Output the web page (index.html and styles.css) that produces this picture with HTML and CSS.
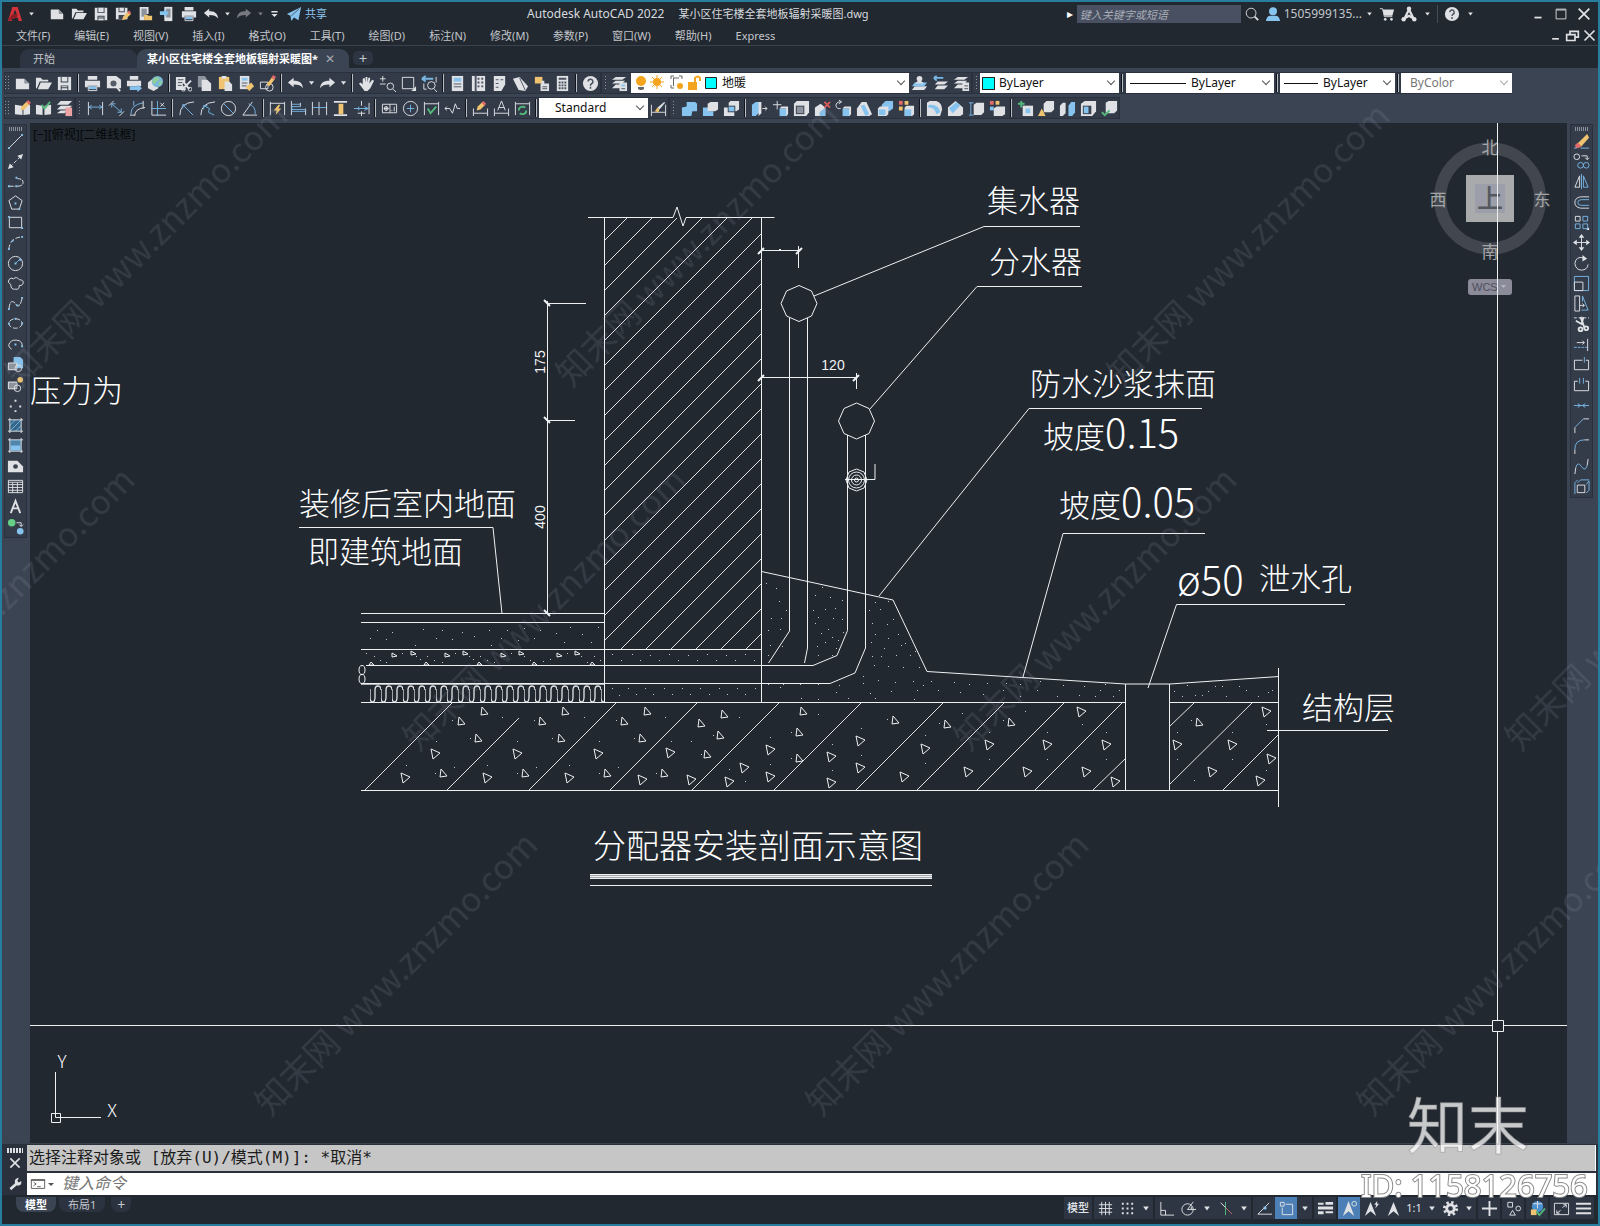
FILE: index.html
```
<!DOCTYPE html>
<html lang="zh-CN">
<head>
<meta charset="utf-8">
<meta name="viewport" content="width=device-width, initial-scale=1">
<title>Autodesk AutoCAD 2022</title>
<link rel="stylesheet" href="styles.css">
</head>
<body>
<svg class="sprite" aria-hidden="true">
  <!-- file and clipboard -->
  <symbol id="new" viewBox="0 0 18 18"><path class="w" d="M2 4h9l5 5v6H2z"/><path class="g" d="M11 4v5h5z"/></symbol>
  <symbol id="open" viewBox="0 0 18 18"><path class="w" d="M1 3h5l2 2h6v2H5l-3 7H1zM6 8h12l-4 7H3z"/></symbol>
  <symbol id="save" viewBox="0 0 18 18"><path class="w" d="M2 2h14v14H2z"/><path class="d" d="M5 2h8v6H5zM5 11h8v5H5z"/><path class="w" d="M6 2h6v5H6zM6 12h6v1H6zM6 14h6v2H6z"/></symbol>
  <symbol id="saveas" viewBox="0 0 18 18"><path class="w" d="M1 2h13v13H1z"/><path class="d" d="M4 2h7v5H4zM4 10h8v5H4z"/><path class="w" d="M5 2h5v4H5z"/><path class="y" d="M8 16l1-4 6-6 3 3-6 6z"/><path class="r" d="M14 7l2-2 2 2-2 2z"/></symbol>
  <symbol id="mopen" viewBox="0 0 18 18"><path class="w" d="M3 1h10v8H8v7H3z"/><path class="g" d="M5 3h6v9H5z"/><path class="y" d="M8 10h4l1 1h4v5H8z"/></symbol>
  <symbol id="msave" viewBox="0 0 18 18"><path class="w" d="M6 1h9v16H6z"/><path class="g" d="M8 3h5v10H8z"/><path class="b" d="M1 6h5V3l5 5-5 5v-3H1z"/></symbol>
  <symbol id="print" viewBox="0 0 18 18"><path class="w" d="M4 1h10v4H4zM1 6h16v7h-3v-2H4v2H1z"/><path class="b" d="M5 12h8v3H5z"/><path class="lw" d="M4.500 11.500h9v5h-9z"/></symbol>
  <symbol id="preview" viewBox="0 0 18 18"><path class="w" d="M2 1h10l5 4v9H2z"/><circle cx="9" cy="9" r="4" fill="#555d69" stroke="#e4e6e8" stroke-width="1.500"/><path class="lw2" d="M12 12l4 5"/></symbol>
  <symbol id="publish" viewBox="0 0 18 18"><path class="w" d="M4 1h9v4H4zM1 6h15v6H1z"/><path class="b" d="M4 12h8v-2l5 4-5 4v-2H4z"/></symbol>
  <symbol id="globe" viewBox="0 0 18 18"><path class="w" d="M1 8l5-4 6 2v8l-5 3-6-3z"/><circle cx="11" cy="7" r="6" fill="#79b8d8"/><path d="M8 3l4-1 1 3-3 2-2 3-3-3zM13 7l3-1-1 4-3 2z" fill="#8fcf9a"/></symbol>
  <symbol id="cut" viewBox="0 0 18 18"><path class="w" d="M1 2h10v5L8 10l3 6H1z"/><path class="dl" d="M3 5h6M3 8h5M3 11h4"/><path class="lw2" d="M8 6l7 9M17 6l-8 8"/><circle class="lw" cx="9" cy="15" r="2"/><circle class="lw" cx="16" cy="15" r="2"/></symbol>
  <symbol id="copy" viewBox="0 0 18 18"><path class="g" d="M2 1h7l2 2v10H2z"/><path class="w" d="M6 5h6l4 4v8H6z"/></symbol>
  <symbol id="paste" viewBox="0 0 18 18"><path class="y" d="M2 2h11v13H2z"/><path class="w" d="M5 1h5v3H5zM8 7h5l3 3v7H8z"/></symbol>
  <symbol id="match" viewBox="0 0 18 18"><path class="w" d="M2 1h10v14H2z"/><path class="b" d="M4 3h6v3H4z"/><path class="dl" d="M4 8.500h6M4 11.500h5"/><path class="y" d="M8 13l6-5 3 4-5 5z"/></symbol>
  <symbol id="bedit" viewBox="0 0 18 18"><path class="lw" d="M1.500 7.500h8v7h-8z"/><circle class="lw" cx="11" cy="13" r="4"/><path class="y" d="M8 10l6-8 3 2-6 8z"/><path class="r" d="M13 3l2-3 3 2-2 3z"/></symbol>
  <symbol id="undo" viewBox="0 0 18 18"><path class="w" d="M1 8l6-5v3c5 0 9 1 10 8-2-3-5-4-10-4v3z"/></symbol>
  <symbol id="redo" viewBox="0 0 18 18"><path class="w" d="M17 8l-6-5v3C6 6 2 7 1 14c2-3 5-4 10-4v3z"/></symbol>
  <symbol id="caret" viewBox="0 0 8 18"><path class="w" d="M1 7h6l-3 4z"/></symbol>
  <symbol id="pan" viewBox="0 0 18 18"><path class="w" d="M5 10V4l2-1 1 5V2h2v6l1-5h2l-1 6 3-4 2 1-4 8-3 3H7L1 9l2-1z"/></symbol>
  <symbol id="zoomrt" viewBox="0 0 18 18"><path class="lw" d="M1 4h6M4 1v6M1 9.500h6M15 15l3 3"/><circle class="lw" cx="12" cy="12" r="3.500"/></symbol>
  <symbol id="zoomwin" viewBox="0 0 18 18"><path class="lw" d="M2.500 2.500h12v12h-12z"/><path class="w" d="M12 17l5-5v5z"/></symbol>
  <symbol id="zoomprev" viewBox="0 0 18 18"><path class="lb" d="M1 4h12M1 4l4-3M1 4l4 3" stroke-width="2"/><path class="lw" d="M3 9v6h3M16 2v6M14 15l3 3"/><circle class="lw" cx="11" cy="11" r="4"/></symbol>
  <symbol id="props" viewBox="0 0 18 18"><path class="w" d="M3 1h12v16H3z"/><path class="b" d="M5 3h8v4H5z"/><path class="dl" d="M5 9.500h8M5 12.500h8"/></symbol>
  <symbol id="dcenter" viewBox="0 0 18 18"><path class="w" d="M2 1h14v16H2z"/><path class="dl" d="M6 1v16M8 4h2M12 4h2M8 8h2M12 8h2M8 12h2M12 12h2" stroke-width="2"/></symbol>
  <symbol id="palette" viewBox="0 0 18 18"><path class="w" d="M3 1h12v9l-4 7H3z"/><path class="dl" d="M5 5h3M5 9h3M5 13h3M10 5h3"/></symbol>
  <symbol id="sheet" viewBox="0 0 18 18"><path class="w" d="M1 4l7-2 9 10-3 5-7-1z"/><path class="dl" d="M8 3l6 13"/></symbol>
  <symbol id="markup" viewBox="0 0 18 18"><path class="y" d="M2 2h8v7H2z"/><path class="w" d="M9 6h3v3H9zM8 9h9v8H8z"/><path class="dl" d="M10 12.500h5M10 14.500h5"/></symbol>
  <symbol id="calc" viewBox="0 0 18 18"><path class="w" d="M3 1h12v16H3z"/><path class="dl" d="M5 4h8M5 8h2M8 8h2M11 8h2M5 11h2M8 11h2M11 11h2M5 14h2M8 14h2M11 14h2" stroke-width="2"/></symbol>
  <symbol id="help" viewBox="0 0 18 18"><circle class="w" cx="9" cy="9" r="8"/><path class="dl" d="M6.500 7a2.500 2.500 0 1 1 3.500 2.300q-1 .5-1 2M9 12.500v2" stroke-width="1.600"/></symbol>
  <symbol id="layers" viewBox="0 0 18 18"><path class="w" d="M5 2h11l-4 3H1zM5 6h10l-3 3H1zM5 10h6v4H1z"/><path class="w" d="M9 8h8v9H9z"/><path class="b" d="M11 10h4v2h-4z"/><path class="dl" d="M11 14.500h4"/></symbol>
  <symbol id="lay1" viewBox="0 0 18 18"><path class="w" d="M4 12h13l-3 4H1z"/><path class="b" d="M4 8h13l-3 4H1z"/><circle class="w" cx="9" cy="4" r="3"/><path class="w" d="M4 9l5-4 5 4z"/></symbol>
  <symbol id="lay2" viewBox="0 0 18 18"><path class="w" d="M6 7h11l-4 3H3zM6 11h11l-4 4H3z"/><path class="lb" d="M2 3h10M2 3l3-2M2 3l3 3" stroke-width="2"/></symbol>
  <symbol id="lay3" viewBox="0 0 18 18"><path class="w" d="M5 2h11l-4 3H1zM5 6h10l-3 3H1zM5 10h5v4H1zM10 8h7v9h-7z"/><path class="dl" d="M12 11.500h4M12 14.500h4"/></symbol>
  <!-- dimension tools -->
  <symbol id="ann1" viewBox="0 0 18 18"><path class="w" d="M1 5l7 1 1 1v9l-8-1zM17 5l-7 1v10l7-1z"/><path class="y" d="M7 11l1-4 6-6 3 3-6 6z"/><path class="r" d="M13 2l2-2 3 3-2 2z"/></symbol>
  <symbol id="ann2" viewBox="0 0 18 18"><path class="w" d="M1 5l7 1v10l-7-1zM17 5l-7 1v10l7-1z"/><path class="lg" d="M7 5l3 4 6-7"/></symbol>
  <symbol id="ann3" viewBox="0 0 18 18"><path class="w" d="M5 1h12l-4 4H1zM5 6h12l-4 4H1zM5 11h7l-3 3H1z"/><path d="M10 8h7v9h-7z" fill="#eda3a3"/></symbol>
  <symbol id="dlin" viewBox="0 0 18 18"><path class="lw" d="M1.500 2v14M16.500 2v14"/><path class="lb" d="M2 7.500h14M5 5.500L2 7.500l3 2M13 5.500l3 2-3 2"/></symbol>
  <symbol id="dali" viewBox="0 0 18 18"><path class="lw" d="M1 6l5-5M12 17l5-5"/><path class="lb" d="M4 4l10 9M4 8V4h4M10 13h4V9"/></symbol>
  <symbol id="darc" viewBox="0 0 18 18"><path class="lb" d="M2 15Q2 5 15 3M5 1v5"/><path class="lw" d="M6 17q0-8 11-9M1 16h5M15 1v8"/></symbol>
  <symbol id="dord" viewBox="0 0 18 18"><path class="lw" d="M2 1v15h15"/><path class="lb" d="M1 9h16M8 1v16"/><path class="lw" d="M11 3l4 4M15 3l-4 4"/></symbol>
  <symbol id="drad" viewBox="0 0 18 18"><path class="lw" d="M17 2Q2 3 2 16"/><path class="lb" d="M5 5l11 11M5 9V5h4"/></symbol>
  <symbol id="djog" viewBox="0 0 18 18"><path class="lw" d="M17 2Q2 3 2 16"/><path class="lb" d="M5 6l6 3-1 4 6 3M5 10V6h4"/></symbol>
  <symbol id="ddia" viewBox="0 0 18 18"><circle class="lw" cx="9" cy="9" r="7.500"/><path class="lb" d="M4 4l10 10"/></symbol>
  <symbol id="dang" viewBox="0 0 18 18"><path class="lw" d="M12 2L2 16h15"/><path class="lb" d="M8 4q8 3 7 11"/></symbol>
  <symbol id="dquick" viewBox="0 0 18 18"><path class="lw" d="M1.500 2v14M16.500 2v14M2 3.500h14"/><path class="y" d="M10 5l-5 6h3l-1 5 6-7h-3l2-4z"/></symbol>
  <symbol id="dbase" viewBox="0 0 18 18"><path class="lw" d="M1.500 1v15M11 3v4M16.500 9v7"/><path class="lb" d="M2 4.500h9M2 12h14M11 7H2v3h15"/></symbol>
  <symbol id="dcont" viewBox="0 0 18 18"><path class="lw" d="M1.500 2v14M8.500 2v14M16.500 2v14"/><path class="lb" d="M2 8h14"/></symbol>
  <symbol id="dspace" viewBox="0 0 18 18"><path class="lw2" d="M2 2h14M2 16h14"/><path class="y" d="M7 4h5v11H7z"/></symbol>
  <symbol id="dbreak" viewBox="0 0 18 18"><path class="lw" d="M9 1v5M9 12v5M17 3v12"/><path class="lb" d="M1 9h16M12 7l4 2-4 2M6 7v4"/><path class="lw" d="M5 14h8"/></symbol>
  <symbol id="tol" viewBox="0 0 18 18"><path class="lw" d="M1.500 4.500h15v9h-15zM9.500 4.500v9M3 9h5M5.500 6.500v5M11 11h1M14 7v5"/><circle class="lw" cx="5.500" cy="9" r="2"/></symbol>
  <symbol id="cmark" viewBox="0 0 18 18"><circle class="lw" cx="9" cy="9" r="7.500"/><path class="lb" d="M9 5v8M5 9h8"/></symbol>
  <symbol id="insp" viewBox="0 0 18 18"><path class="lw" d="M1.500 2v14M16.500 2v14M2 4h14"/><path class="lg" d="M5 9l3 5 6-7"/></symbol>
  <symbol id="jogl" viewBox="0 0 18 18"><path class="lw" d="M1 9h5l3 5 3-10 2 5h3M3 7L1 9l2 2"/></symbol>
  <symbol id="dedit" viewBox="0 0 18 18"><path class="lw" d="M1.500 9v8M16.500 9v8M2 14h14"/><path class="y" d="M5 11l1-4 5-5 3 3-5 5z"/><path class="r" d="M10 3l2-2 3 3-2 2z"/></symbol>
  <symbol id="dtedit" viewBox="0 0 18 18"><path class="lw" d="M1.500 9v8M16.500 9v8M2 14h14M5 11l4-10 4 10M6 8h6"/></symbol>
  <symbol id="dupd" viewBox="0 0 18 18"><path class="lw" d="M1.500 2v14M16.500 2v14M2 4h14"/><path class="lg" d="M5 11q0-4 5-4l2 1M13 11q0 4-5 4l-2-1"/></symbol>
  <symbol id="dstyle" viewBox="0 0 18 18"><path class="lw" d="M1.500 5v12M16.500 5v12M2 13h14"/><path class="y" d="M5 12l3-4 2 2-1 3z"/><path class="w" d="M8 8l7-6 1 1-6 7z"/></symbol>
  <!-- solid editing -->
  <symbol id="s1" viewBox="0 0 18 18"><path class="b" d="M6 2h9l2 2v8h-5l-1 5H1V8l5-1z"/></symbol>
  <symbol id="s2" viewBox="0 0 18 18"><path class="b" d="M1 8h6v4h5v5H1z"/><path class="w" d="M6 4l3-2h8v8l-3 2H6z"/></symbol>
  <symbol id="s3" viewBox="0 0 18 18"><path class="w" d="M6 3l2-2h9v9l-3 2H6zM1 8h6v4h5v5H1z"/><path class="d" d="M5 6h8v7H5z"/><path class="b" d="M6 7h6v5H6z"/></symbol>
  <symbol id="s4" viewBox="0 0 18 18"><path class="b" d="M1 5l4-3h4v11l-4 4H1z"/><path class="w" d="M8 2h3v12l-3 3z"/><path class="lw" d="M12 9h5M15 7l2 2-2 2"/></symbol>
  <symbol id="s5" viewBox="0 0 18 18"><path class="lw" d="M1 5h9M5.500 1v9"/><path class="b" d="M8 9h8v8H8z"/><path class="w" d="M8 9l2-2h7v8l-2 2V9z"/></symbol>
  <symbol id="s6" viewBox="0 0 18 18"><path class="w" d="M1 4l3-3h13v12l-3 4H1z"/><path class="d" d="M3 6h9v9H3z"/><path class="g" d="M4 7h7v7H4z"/></symbol>
  <symbol id="s7" viewBox="0 0 18 18"><path class="w" d="M1 8l6-4 5 4v9H1z"/><path class="b" d="M6 13l6-5v9H6z"/><path d="M11 2l6 6M17 2l-6 6" stroke="#d85a5a" stroke-width="2"/></symbol>
  <symbol id="s8" viewBox="0 0 18 18"><path class="lw" d="M6 2Q1 2 1 6q1 4 5 3M4 0l3 2-3 2"/><path class="b" d="M8 9h8v8H8z"/><path class="w" d="M8 9l2-2h7v8l-2 2V9z"/></symbol>
  <symbol id="s9" viewBox="0 0 18 18"><path class="w" d="M1 9l5-7h5l6 13-3 2H1z"/><path class="b" d="M5 6l4-1 5 10-4 2z"/></symbol>
  <symbol id="s10" viewBox="0 0 18 18"><path class="b" d="M5 5l4-4h8v8l-4 3H5z"/><path class="w" d="M1 9l2-2h9v8l-2 2H1z"/><path class="b" d="M2 10h7v6H2z"/></symbol>
  <symbol id="s11" viewBox="0 0 18 18"><path class="r" d="M1 1h4v4H1z"/><path class="y" d="M7 1h4v4H7zM1 7h4v4H1z"/><path class="w" d="M7 8l2-2h8v9l-2 2H7z"/><path class="b" d="M7 10h7v7H7z"/></symbol>
  <symbol id="s12" viewBox="0 0 18 18"><path class="w" d="M1 3l3-2h7q6 2 6 9l-2 7H1z"/><path class="b" d="M2 8q7-1 9 7l4-2q-1-9-12-8z"/></symbol>
  <symbol id="s13" viewBox="0 0 18 18"><path class="w" d="M1 8l8-7 8 7v7l-3 2H1z"/><path class="b" d="M2 9l8-7 4 4-8 8z"/></symbol>
  <symbol id="s14" viewBox="0 0 18 18"><path class="lb" d="M1 3h5M3 3v13M1 16h5"/><path class="w" d="M6 5l3-2h8v10l-3 3H6z"/></symbol>
  <symbol id="s15" viewBox="0 0 18 18"><path class="r" d="M1 1h4v4H1z"/><path class="y" d="M7 1h4v4H7z"/><path class="b" d="M1 7h4v4H1z"/><path class="w" d="M5 9l3-2h9v8l-3 2H5z"/></symbol>
  <symbol id="s16" viewBox="0 0 18 18"><path class="lg" d="M1 4h7M4.500 1v7"/><path class="w" d="M6 6h11v11H6z"/><path class="b" d="M9 9h5v5H9z"/></symbol>
  <symbol id="s17" viewBox="0 0 18 18"><path class="w" d="M6 4l3-3h8v9l-3 3H6z"/><path class="y" d="M4 9l4 8H0z"/></symbol>
  <symbol id="s18" viewBox="0 0 18 18"><path class="w" d="M1 6l3-3h3v11l-3 3H1z"/><path class="b" d="M10 6l3-4h4v11l-3 4h-4z"/></symbol>
  <symbol id="s19" viewBox="0 0 18 18"><path class="w" d="M1 4l4-3h12v11l-4 5H1z"/><path class="d" d="M3 6h9v9H3z"/><path class="b" d="M4 7h5v7H4z"/></symbol>
  <symbol id="s20" viewBox="0 0 18 18"><path class="w" d="M5 3l3-2h9v10l-3 3H5z"/><path class="lg" d="M1 13l3 3 5-5"/></symbol>
  <!-- draw tools -->
  <symbol id="line" viewBox="0 0 18 18"><path class="lw" d="M2 16L16 2"/><path class="b" d="M1 15h2v2H1zM15 1h2v2h-2z"/></symbol>
  <symbol id="xline" viewBox="0 0 18 18"><path class="lw" d="M3 15L15 3" stroke-dasharray="4 2"/><path class="w" d="M1 17l2-6 4 4zM17 1l-2 6-4-4z"/></symbol>
  <symbol id="pline" viewBox="0 0 18 18"><path class="lw" d="M2 14h7M11 14q6 0 6-4t-6-4" stroke-dasharray="5 1"/><path class="b" d="M1 13h2v2H1zM9 13h2v2H9zM9 4h2v2H9z"/></symbol>
  <symbol id="polygon" viewBox="0 0 18 18"><path class="lw" d="M9 2l7 5-3 9H5L2 7z"/><path class="b" d="M8 9h2v2H8zM12 15h2v2h-2z"/></symbol>
  <symbol id="rect" viewBox="0 0 18 18"><path class="lw" d="M2.500 3.500h13v11h-13z"/><path class="b" d="M1 2h2v2H1zM15 14h2v2h-2z"/></symbol>
  <symbol id="arc" viewBox="0 0 18 18"><path class="lw" d="M2 16Q3 4 16 3" stroke-dasharray="5 2"/><path class="b" d="M1 15h2v2H1zM5 6h2v2H5zM15 2h2v2h-2z"/></symbol>
  <symbol id="circle" viewBox="0 0 18 18"><circle class="lw" cx="9" cy="9" r="7.500"/><path class="lb" d="M9 9l5-5"/><path class="b" d="M8 8h2v2H8zM13 4h2v2h-2z"/></symbol>
  <symbol id="cloud" viewBox="0 0 18 18"><path class="lw" d="M4 10Q0 8 2 5t5-1q3-3 6 1 5 0 4 4-1 3-4 2 0 5-4 4-5 1-5-5z"/></symbol>
  <symbol id="spline" viewBox="0 0 18 18"><path class="lw" d="M2 15q1-9 4-8t4 4q4 3 6-8" stroke-dasharray="6 1"/><path class="b" d="M1 14h2v2H1zM15 2h2v2h-2zM10 10h2v2h-2z"/></symbol>
  <symbol id="ellipse" viewBox="0 0 18 18"><ellipse class="lw" cx="9" cy="9" rx="7" ry="5" stroke-dasharray="5 2"/><path class="b" d="M1 8h2v2H1zM15 8h2v2h-2zM8 3h2v2H8z"/></symbol>
  <symbol id="earc" viewBox="0 0 18 18"><path class="lw" d="M5 14Q0 11 3 7t10-2q4 2 3 6"/><path class="b" d="M8 8h2v2H8zM15 10h2v2h-2z"/></symbol>
  <symbol id="insb" viewBox="0 0 18 18"><path class="b" d="M7 1h7l3 3v9H7z"/><path class="g" d="M1 7h9v8H1z"/><path class="lw" d="M1.500 7.500h9v7h-9z"/><circle class="lw" cx="12" cy="13" r="3.500"/></symbol>
  <symbol id="mkb" viewBox="0 0 18 18"><path class="g" d="M1 6h9v8H1z"/><path class="lw" d="M1.500 6.500h9v7h-9z"/><circle class="lw" cx="11" cy="13" r="3.500"/><circle class="y" cx="14" cy="4" r="3"/></symbol>
  <symbol id="point" viewBox="0 0 18 18"><path class="w" d="M8 3h2v2H8zM3 9h2v2H3zM13 9h2v2h-2zM8 14h2v2H8z"/></symbol>
  <symbol id="hatch" viewBox="0 0 18 18"><path d="M3 3h12v12H3z" fill="#356587"/><path class="lb" d="M3 9l6-6M3 15L15 3M9 15l6-6"/><path class="lw" d="M3 1v16M15 1v16M1 3h16M1 15h16"/></symbol>
  <symbol id="grad" viewBox="0 0 18 18"><path d="M3 3h12v12H3z" fill="#4f86ac"/><path class="b" d="M4 9h10v5H4z"/><path class="lw" d="M3 1v16M15 1v16M1 3h16M1 15h16"/></symbol>
  <symbol id="region" viewBox="0 0 18 18"><path class="w" d="M1 3h10l6 6v6H1z"/><circle class="d" cx="9" cy="9" r="2.500"/></symbol>
  <symbol id="table" viewBox="0 0 18 18"><path class="lw" d="M1.500 2.500h15v13h-15zM1 7h16M1 10h16M1 13h16M6 5v11M11 5v11M1 4.500h16"/></symbol>
  <symbol id="mtext" viewBox="0 0 18 18"><path class="lw2" d="M4 16L9 3l5 13M6 11h6"/></symbol>
  <symbol id="adds" viewBox="0 0 18 18"><circle cx="5" cy="5" r="4" fill="#66cf86"/><circle class="b" cx="14" cy="14" r="3.500"/><path class="lw" d="M10 5h5v4M13 7l2 2 2-2"/></symbol>
  <!-- modify tools -->
  <symbol id="erase" viewBox="0 0 18 18"><path class="y" d="M4 12L15 1l2 4-9 10z"/><path class="r" d="M2 13l3-3 4 4-3 2H3z"/><path class="lb" d="M8 16h9M1 16h3"/></symbol>
  <symbol id="mcopy" viewBox="0 0 18 18"><circle class="lw" cx="4" cy="4" r="3"/><path class="lw" d="M9 3h6v4M13 5l2 2 2-2"/><circle class="lb" cx="8" cy="13" r="3"/><circle class="lb" cx="14" cy="13" r="3"/></symbol>
  <symbol id="mirror" viewBox="0 0 18 18"><path class="lw" d="M7 3v12H2z"/><path class="lb" d="M9 1v16M11 3v12h5z"/></symbol>
  <symbol id="offset" viewBox="0 0 18 18"><path class="lw" d="M17 3H8q-6 1-6 6t6 6h9"/><path class="lb" d="M17 6H9q-4 0-4 3t4 3h8"/></symbol>
  <symbol id="array" viewBox="0 0 18 18"><path class="lw" d="M2.500 2.500h5v5h-5z"/><path class="lb" d="M10.500 2.500h5v5h-5zM2.500 10.500h5v5h-5zM10.500 10.500h5v5h-5z"/><path class="w" d="M14 17l3-3v3z"/></symbol>
  <symbol id="move" viewBox="0 0 18 18"><path class="lw" d="M9 2v14M2 9h14"/><path class="w" d="M9 0l3 4H6zM9 18l3-4H6zM0 9l4-3v6zM18 9l-4-3v6z"/></symbol>
  <symbol id="rotate" viewBox="0 0 18 18"><path class="lw" d="M11 3Q3 1 2 9q1 7 7 7t7-6"/><path class="w" d="M10 0l5 4-5 3z"/></symbol>
  <symbol id="scale" viewBox="0 0 18 18"><path class="lb" d="M1.500 1.500h15v15h-15z"/><path class="lw" d="M1.500 7.500h9v9h-9z"/></symbol>
  <symbol id="stretch" viewBox="0 0 18 18"><path class="lw" d="M7 1H2v16h5zM7 11h5M10 9l2 2-2 2"/><path class="lb" d="M10 1l6 15H9M10 1v6"/></symbol>
  <symbol id="trim" viewBox="0 0 18 18"><path class="lw" d="M1 2h16" stroke-dasharray="3 2"/><path class="lw2" d="M8 1l4 11M11 1L9 9M3 5l7 4"/><circle class="lw2" cx="8" cy="14" r="2"/><circle class="lw2" cx="14" cy="13" r="2"/></symbol>
  <symbol id="extend" viewBox="0 0 18 18"><path class="lw" d="M15.500 3v13M4 7h8M10 5l2 2-2 2"/><path class="lb" d="M1 12h14" stroke-dasharray="3 1"/></symbol>
  <symbol id="brkp" viewBox="0 0 18 18"><path class="lw" d="M10 4.500H1.500v10h15v-10h-3"/><path class="lb" d="M12 1v6"/></symbol>
  <symbol id="brk" viewBox="0 0 18 18"><path class="lw" d="M5 4.500H1.500v10h15v-10H13"/><path class="lb" d="M7 1v6M11 1v6"/></symbol>
  <symbol id="join" viewBox="0 0 18 18"><path class="lb" d="M1 9h16M5 7l3 2-3 2M13 7l-3 2 3 2"/></symbol>
  <symbol id="chamfer" viewBox="0 0 18 18"><path class="lw" d="M2 17v-6M11 2h6"/><path class="lb" d="M2 11l9-9"/></symbol>
  <symbol id="fillet" viewBox="0 0 18 18"><path class="lw" d="M2 17v-5M12 2h5"/><path class="lb" d="M2 12Q2 2 12 2"/></symbol>
  <symbol id="blend" viewBox="0 0 18 18"><path class="lw" d="M2 17l1-7M15 8l1-7"/><path class="lb" d="M3 10q2-7 6-1t6-1"/></symbol>
  <symbol id="explode" viewBox="0 0 18 18"><path class="lw" d="M4.500 7.500h8v8h-8z"/><path class="lb" d="M2 5v12M5 5l3-3h9M14 7l3-4v10l-3 3M2 5l3-3"/></symbol>
  <!-- title and status bar -->
  <symbol id="logo" viewBox="0 0 18 18"><path fill="#d5333b" d="M1 17L6 1h6l5 16h-4l-1-4-6 1-1 3zM7 10l4-1-2-5z"/><path fill="#8d1d25" d="M1 17l10-4 1-4-7 1z"/></symbol>
  <symbol id="send" viewBox="0 0 18 18"><path class="b" d="M1 9l16-8-3 15-5-3-3 4-1-6z"/><path class="dl" d="M6 11l9-8"/></symbol>
  <symbol id="more" viewBox="0 0 10 18"><path class="w" d="M1 5h8v2H1zM1 9h8l-4 4z"/></symbol>
  <symbol id="search" viewBox="0 0 18 18"><circle class="lw" cx="8" cy="8" r="5.500"/><path class="lw2" d="M12 12l4 4"/></symbol>
  <symbol id="user" viewBox="0 0 18 18"><circle class="b" cx="9" cy="6" r="4.500"/><path class="b" d="M1 17q1-6 5-6h6q4 0 5 6z"/></symbol>
  <symbol id="cart" viewBox="0 0 18 18"><path class="lw" d="M1 3h3l2 9h9"/><path class="w" d="M4 4h13l-2 7H6z"/><circle class="w" cx="7" cy="15" r="1.500"/><circle class="w" cx="14" cy="15" r="1.500"/></symbol>
  <symbol id="apps" viewBox="0 0 18 18"><path d="M4 14L9 4l5 10-5-3z" fill="none" stroke="#dfe1e4" stroke-width="2.500"/><circle class="w" cx="9" cy="3" r="2.500"/><circle class="w" cx="3" cy="15" r="2.500"/><circle class="w" cx="15" cy="15" r="2.500"/></symbol>
  <symbol id="min" viewBox="0 0 18 18"><path class="lw2" d="M5 13h8"/></symbol>
  <symbol id="max" viewBox="0 0 18 18"><path class="lw" d="M3.500 3.500h11v11h-11zM4 4.500h10"/></symbol>
  <symbol id="restore" viewBox="0 0 18 18"><path class="lw2" d="M6 7V4h10v7h-4M2 8h10v7H2z"/></symbol>
  <symbol id="close" viewBox="0 0 18 18"><path class="lw2" d="M3 3l12 12M15 3L3 15"/></symbol>
  <symbol id="wrench" viewBox="0 0 18 18"><path class="w" d="M2 14l7-6q-1-4 2-6l3-1-2 4 2 2 3-2q1 5-3 6l-3 0-7 6z"/></symbol>
  <symbol id="prompt" viewBox="0 0 18 18"><path d="M1.500 4h15v10h-15zM1 5h16M4 7l3 2-3 2M8 12h4" fill="none" stroke="#555"/></symbol>
  <symbol id="gridi" viewBox="0 0 18 18"><path class="lw" d="M5 2v14M9 2v14M13 2v14M2 5h14M2 9h14M2 13h14"/></symbol>
  <symbol id="snap" viewBox="0 0 18 18"><path class="w" d="M3 3h2v2H3zM8 3h2v2H8zM13 3h2v2h-2zM3 8h2v2H3zM8 8h2v2H8zM13 8h2v2h-2zM3 13h2v2H3zM8 13h2v2H8zM13 13h2v2h-2z"/></symbol>
  <symbol id="ortho" viewBox="0 0 18 18"><path class="lw" d="M3 2v14h14M3 11h5v5"/></symbol>
  <symbol id="polar" viewBox="0 0 18 18"><circle class="lw" cx="8" cy="10" r="6"/><path class="lw" d="M8 10h9M8 10l6-8M12 7v3"/></symbol>
  <symbol id="iso" viewBox="0 0 18 18"><path d="M4 3l12 12" stroke="#c46a6a"/><path d="M9 2v14" stroke="#53b87a"/><path class="lw" d="M4 3l5 5"/></symbol>
  <symbol id="otrack" viewBox="0 0 18 18"><path class="lw" d="M14 3L2 15h15"/><path class="b" d="M8 7h3v3H8z"/></symbol>
  <symbol id="osnap" viewBox="0 0 18 18"><path class="lw" d="M8 4.500h7.500v11h-11V8M2.500 2.500h4v4h-4z"/></symbol>
  <symbol id="lwt" viewBox="0 0 18 18"><path class="w" d="M1 3h6v2H1zM9 2h8v3H9zM1 7h16v3H1zM1 12h6v3H1zM9 12h8v2H9z"/></symbol>
  <symbol id="anvis" viewBox="0 0 18 18"><path class="w" d="M8 1l6 16-6-5-6 5z"/><circle class="lw" cx="14" cy="4" r="2.500"/></symbol>
  <symbol id="anauto" viewBox="0 0 18 18"><path class="w" d="M8 2l6 15-6-5-6 5zM15 1l-3 4h2l-1 4 4-5h-2z"/></symbol>
  <symbol id="anscale" viewBox="0 0 18 18"><path class="w" d="M9 2l6 15-6-5-6 5z"/></symbol>
  <symbol id="gear" viewBox="0 0 18 18"><circle cx="9" cy="9" r="6.500" fill="none" stroke="#dfe1e4" stroke-width="3" stroke-dasharray="2.500 2.600"/><circle cx="9" cy="9" r="4" fill="none" stroke="#dfe1e4" stroke-width="3"/></symbol>
  <symbol id="plus" viewBox="0 0 18 18"><path class="lw2" d="M9 1v16M1 9h16"/></symbol>
  <symbol id="isolate" viewBox="0 0 18 18"><path class="lw" d="M3 2.500h5v5H3zM8 11l3 5H5z"/><circle class="lw" cx="14" cy="9" r="2.500"/></symbol>
  <symbol id="hw" viewBox="0 0 18 18"><circle cx="9" cy="7" r="6" fill="#4a8fd0"/><path class="lw" d="M4 4h10M9 1v8"/><path class="y" d="M2 10h6v6H2z"/><path class="lg" d="M8 12l3 4 6-7"/></symbol>
  <symbol id="full" viewBox="0 0 18 18"><path class="lw" d="M1.500 3.500h15v12h-15zM10 8l4-3M11 5h3v3M8 11l-4 3M4 11v3h3"/></symbol>
  <symbol id="burger" viewBox="0 0 18 18"><path class="lw2" d="M1 4h16M1 9h16M1 14h16"/></symbol>
</svg>

<div class="app">
<header class="titlebar">
  <button class="ib logo" aria-label="应用程序菜单"><svg><use href="#logo"/></svg></button>
  <button class="cb wide first" aria-label="展开"><svg><use href="#caret"/></svg></button>
  <div class="quick">
    <button class="ib" aria-label="新建"><svg><use href="#new"/></svg></button>
    <button class="ib" aria-label="打开"><svg><use href="#open"/></svg></button>
    <button class="ib" aria-label="保存"><svg><use href="#save"/></svg></button>
    <button class="ib" aria-label="另存为"><svg><use href="#saveas"/></svg></button>
    <button class="ib" aria-label="从移动端打开"><svg><use href="#mopen"/></svg></button>
    <button class="ib" aria-label="保存到移动端"><svg><use href="#msave"/></svg></button>
    <button class="ib" aria-label="打印"><svg><use href="#print"/></svg></button>
    <button class="ib" aria-label="放弃"><svg><use href="#undo"/></svg></button>
    <button class="cb" aria-label="放弃列表"><svg><use href="#caret"/></svg></button>
    <button class="ib faded" aria-label="重做"><svg><use href="#redo"/></svg></button>
    <button class="cb faded" aria-label="重做列表"><svg><use href="#caret"/></svg></button>
    <button class="cb wide" aria-label="自定义"><svg><use href="#more"/></svg></button>
    <button class="share"><svg><use href="#send"/></svg>共享</button>
  </div>
  <h1 class="caption"><span>Autodesk AutoCAD 2022</span><span class="file">某小区住宅楼全套地板辐射采暖图.dwg</span></h1>
  <div class="account">
    <button class="arrow" aria-label="展开搜索">▸</button>
    <input class="find" type="text" aria-label="搜索" placeholder="键入关键字或短语">
    <button class="ib" aria-label="搜索"><svg><use href="#search"/></svg></button>
    <button class="who"><svg><use href="#user"/></svg>1505999135...</button>
    <button class="cb" aria-label="账户"><svg><use href="#caret"/></svg></button>
    <button class="ib" aria-label="商店"><svg><use href="#cart"/></svg></button>
    <button class="ib" aria-label="应用"><svg><use href="#apps"/></svg></button>
    <button class="cb" aria-label="应用列表"><svg><use href="#caret"/></svg></button>
    <i class="bar"></i>
    <button class="ib" aria-label="帮助"><svg><use href="#help"/></svg></button>
    <button class="cb" aria-label="帮助列表"><svg><use href="#caret"/></svg></button>
  </div>
  <div class="winctl">
    <button class="ib" aria-label="最小化"><svg><use href="#min"/></svg></button>
    <button class="ib" aria-label="最大化"><svg><use href="#max"/></svg></button>
    <button class="ib" aria-label="关闭"><svg><use href="#close"/></svg></button>
  </div>
</header>

<nav class="menubar">
  <a href="#">文件(F)</a><a href="#">编辑(E)</a><a href="#">视图(V)</a><a href="#">插入(I)</a><a href="#">格式(O)</a><a href="#">工具(T)</a><a href="#">绘图(D)</a><a href="#">标注(N)</a><a href="#">修改(M)</a><a href="#">参数(P)</a><a href="#">窗口(W)</a><a href="#">帮助(H)</a><a href="#">Express</a>
  <div class="docctl">
    <button class="ib" aria-label="最小化图形"><svg><use href="#min"/></svg></button>
    <button class="ib" aria-label="还原图形"><svg><use href="#restore"/></svg></button>
    <button class="ib" aria-label="关闭图形"><svg><use href="#close"/></svg></button>
  </div>
</nav>

<div class="tabs">
  <button class="tab start">开始</button>
  <div class="tab active"><button class="tabname">某小区住宅楼全套地板辐射采暖图*</button><button class="x" aria-label="关闭选项卡">✕</button></div>
  <button class="tab add" aria-label="新选项卡">+</button>
</div>

<div class="ribbon">
  <div class="row">
    <div class="panel">
      <i class="grip"></i>
      <button class="tool" aria-label="新建"><svg><use href="#new"/></svg></button>
      <button class="tool" aria-label="打开"><svg><use href="#open"/></svg></button>
      <button class="tool" aria-label="保存"><svg><use href="#save"/></svg></button>
      <i class="sep"></i>
      <button class="tool" aria-label="打印"><svg><use href="#print"/></svg></button>
      <button class="tool" aria-label="打印预览"><svg><use href="#preview"/></svg></button>
      <button class="tool" aria-label="发布"><svg><use href="#publish"/></svg></button>
      <button class="tool" aria-label="三维打印"><svg><use href="#globe"/></svg></button>
      <i class="sep"></i>
      <button class="tool" aria-label="剪切"><svg><use href="#cut"/></svg></button>
      <button class="tool" aria-label="复制"><svg><use href="#copy"/></svg></button>
      <button class="tool" aria-label="粘贴"><svg><use href="#paste"/></svg></button>
      <button class="tool" aria-label="特性匹配"><svg><use href="#match"/></svg></button>
      <button class="tool" aria-label="块编辑器"><svg><use href="#bedit"/></svg></button>
      <i class="sep"></i>
      <button class="tool" aria-label="放弃"><svg><use href="#undo"/></svg></button>
      <button class="drop" aria-label="放弃列表"><svg><use href="#caret"/></svg></button>
      <button class="tool" aria-label="重做"><svg><use href="#redo"/></svg></button>
      <button class="drop" aria-label="重做列表"><svg><use href="#caret"/></svg></button>
      <i class="sep"></i>
      <button class="tool" aria-label="平移"><svg><use href="#pan"/></svg></button>
      <button class="tool" aria-label="实时缩放"><svg><use href="#zoomrt"/></svg></button>
      <button class="tool" aria-label="窗口缩放"><svg><use href="#zoomwin"/></svg></button>
      <button class="tool" aria-label="缩放上一个"><svg><use href="#zoomprev"/></svg></button>
      <i class="sep"></i>
      <button class="tool" aria-label="特性"><svg><use href="#props"/></svg></button>
      <button class="tool" aria-label="设计中心"><svg><use href="#dcenter"/></svg></button>
      <button class="tool" aria-label="工具选项板"><svg><use href="#palette"/></svg></button>
      <button class="tool" aria-label="图纸集"><svg><use href="#sheet"/></svg></button>
      <button class="tool" aria-label="标记集"><svg><use href="#markup"/></svg></button>
      <button class="tool" aria-label="计算器"><svg><use href="#calc"/></svg></button>
      <i class="sep"></i>
      <button class="tool" aria-label="帮助"><svg><use href="#help"/></svg></button>
    </div>
    <div class="panel">
      <i class="grip slim"></i>
      <button class="tool" aria-label="图层特性"><svg><use href="#layers"/></svg></button>
      <div class="combo layer">
        <svg class="state" viewBox="0 0 86 20" aria-hidden="true">
          <circle cx="10" cy="8" r="5" fill="#f5a51d"/><path d="M7 14h6v2l-2 1H9l-2-1z" fill="#666"/>
          <circle cx="26" cy="9" r="4" fill="#f5a51d"/><path d="M26 2v14M19 9h14M21 4l10 10M31 4L21 14" stroke="#f5a51d" fill="none"/>
          <path d="M40 6V3h3M48 3h3v3M40 12v3h3M42 5h6" stroke="#666" fill="none"/><path d="M42.500 5v8" stroke="#666"/><circle cx="49" cy="13" r="3" fill="#f5a51d"/>
          <path d="M57 9h9v8h-9z" fill="#f5a51d"/><path d="M64 9V5q3-3 5 0v3" stroke="#f5a51d" stroke-width="2" fill="none"/>
          <path d="M74.500 4.500h11v11h-11z" fill="#0ff" stroke="#222"/>
        </svg>
        <select aria-label="图层"><option>地暖</option></select>
      </div>
      <button class="tool" aria-label="置为当前"><svg><use href="#lay1"/></svg></button>
      <button class="tool" aria-label="上一个图层"><svg><use href="#lay2"/></svg></button>
      <button class="tool" aria-label="图层状态"><svg><use href="#lay3"/></svg></button>
    </div>
    <div class="panel">
      <i class="grip slim"></i>
      <div class="combo color"><i class="swatch"></i><select aria-label="颜色"><option>ByLayer</option></select></div>
      <i class="sep"></i>
      <div class="combo ltype"><i class="rule"></i><select aria-label="线型"><option>ByLayer</option></select></div>
      <i class="sep thin"></i>
      <div class="combo lweight"><i class="rule"></i><select aria-label="线宽"><option>ByLayer</option></select></div>
      <i class="sep thin"></i>
      <div class="combo pstyle"><select aria-label="打印样式" disabled><option>ByColor</option></select></div>
    </div>
  </div>
  <div class="row">
    <div class="panel">
      <i class="grip"></i>
      <button class="tool" aria-label="编辑参照"><svg><use href="#ann1"/></svg></button>
      <button class="tool" aria-label="保存参照"><svg><use href="#ann2"/></svg></button>
      <button class="tool" aria-label="图层转换"><svg><use href="#ann3"/></svg></button>
    </div>
    <div class="panel">
      <i class="grip"></i>
      <button class="tool" aria-label="线性"><svg><use href="#dlin"/></svg></button>
      <button class="tool" aria-label="对齐"><svg><use href="#dali"/></svg></button>
      <button class="tool" aria-label="弧长"><svg><use href="#darc"/></svg></button>
      <button class="tool" aria-label="坐标"><svg><use href="#dord"/></svg></button>
      <i class="sep"></i>
      <button class="tool" aria-label="半径"><svg><use href="#drad"/></svg></button>
      <button class="tool" aria-label="折弯"><svg><use href="#djog"/></svg></button>
      <button class="tool" aria-label="直径"><svg><use href="#ddia"/></svg></button>
      <button class="tool" aria-label="角度"><svg><use href="#dang"/></svg></button>
      <i class="sep"></i>
      <button class="tool" aria-label="快速标注"><svg><use href="#dquick"/></svg></button>
      <button class="tool" aria-label="基线"><svg><use href="#dbase"/></svg></button>
      <button class="tool" aria-label="连续"><svg><use href="#dcont"/></svg></button>
      <button class="tool" aria-label="等距"><svg><use href="#dspace"/></svg></button>
      <button class="tool" aria-label="折断"><svg><use href="#dbreak"/></svg></button>
      <i class="sep"></i>
      <button class="tool" aria-label="公差"><svg><use href="#tol"/></svg></button>
      <button class="tool" aria-label="圆心标记"><svg><use href="#cmark"/></svg></button>
      <button class="tool" aria-label="检验"><svg><use href="#insp"/></svg></button>
      <button class="tool" aria-label="折弯线性"><svg><use href="#jogl"/></svg></button>
      <i class="sep"></i>
      <button class="tool" aria-label="编辑标注"><svg><use href="#dedit"/></svg></button>
      <button class="tool" aria-label="编辑标注文字"><svg><use href="#dtedit"/></svg></button>
      <button class="tool" aria-label="标注更新"><svg><use href="#dupd"/></svg></button>
      <i class="sep thin"></i>
      <div class="combo dimstyle"><select aria-label="标注样式"><option>Standard</option></select></div>
      <button class="tool" aria-label="标注样式管理"><svg><use href="#dstyle"/></svg></button>
    </div>
    <div class="panel">
      <i class="grip"></i>
      <button class="tool" aria-label="并集"><svg><use href="#s1"/></svg></button>
      <button class="tool" aria-label="差集"><svg><use href="#s2"/></svg></button>
      <button class="tool" aria-label="交集"><svg><use href="#s3"/></svg></button>
      <i class="sep"></i>
      <button class="tool" aria-label="拉伸面"><svg><use href="#s4"/></svg></button>
      <button class="tool" aria-label="移动面"><svg><use href="#s5"/></svg></button>
      <button class="tool" aria-label="偏移面"><svg><use href="#s6"/></svg></button>
      <button class="tool" aria-label="删除面"><svg><use href="#s7"/></svg></button>
      <button class="tool" aria-label="旋转面"><svg><use href="#s8"/></svg></button>
      <button class="tool" aria-label="倾斜面"><svg><use href="#s9"/></svg></button>
      <button class="tool" aria-label="复制面"><svg><use href="#s10"/></svg></button>
      <button class="tool" aria-label="着色面"><svg><use href="#s11"/></svg></button>
      <i class="sep"></i>
      <button class="tool" aria-label="圆角边"><svg><use href="#s12"/></svg></button>
      <button class="tool" aria-label="倒角边"><svg><use href="#s13"/></svg></button>
      <button class="tool" aria-label="复制边"><svg><use href="#s14"/></svg></button>
      <button class="tool" aria-label="着色边"><svg><use href="#s15"/></svg></button>
      <i class="sep"></i>
      <button class="tool" aria-label="压印"><svg><use href="#s16"/></svg></button>
      <button class="tool" aria-label="清除"><svg><use href="#s17"/></svg></button>
      <button class="tool" aria-label="分割"><svg><use href="#s18"/></svg></button>
      <button class="tool" aria-label="抽壳"><svg><use href="#s19"/></svg></button>
      <button class="tool" aria-label="检查"><svg><use href="#s20"/></svg></button>
    </div>
  </div>
</div>

<main class="work">
  <aside class="side left">
    <div class="vpanel draw">
      <i class="hgrip"></i>
      <button aria-label="直线"><svg><use href="#line"/></svg></button>
      <button aria-label="构造线"><svg><use href="#xline"/></svg></button>
      <button aria-label="多段线"><svg><use href="#pline"/></svg></button>
      <button aria-label="多边形"><svg><use href="#polygon"/></svg></button>
      <button aria-label="矩形"><svg><use href="#rect"/></svg></button>
      <button aria-label="圆弧"><svg><use href="#arc"/></svg></button>
      <button aria-label="圆"><svg><use href="#circle"/></svg></button>
      <button aria-label="修订云线"><svg><use href="#cloud"/></svg></button>
      <button aria-label="样条曲线"><svg><use href="#spline"/></svg></button>
      <button aria-label="椭圆"><svg><use href="#ellipse"/></svg></button>
      <button aria-label="椭圆弧"><svg><use href="#earc"/></svg></button>
      <button aria-label="插入块"><svg><use href="#insb"/></svg></button>
      <button aria-label="创建块"><svg><use href="#mkb"/></svg></button>
      <button aria-label="点"><svg><use href="#point"/></svg></button>
      <button aria-label="图案填充"><svg><use href="#hatch"/></svg></button>
      <button aria-label="渐变色"><svg><use href="#grad"/></svg></button>
      <button aria-label="面域"><svg><use href="#region"/></svg></button>
      <button aria-label="表格"><svg><use href="#table"/></svg></button>
      <button aria-label="多行文字"><svg><use href="#mtext"/></svg></button>
      <button aria-label="添加选定对象"><svg><use href="#adds"/></svg></button>
    </div>
  </aside>

  <div class="canvas">
    <svg class="drawing" viewBox="30 123 1537 1020" role="img" aria-label="分配器安装剖面示意图">
      <defs>
        <clipPath id="wall"><path d="M604.500 218h157v431h-157z"/></clipPath>
        <pattern id="coil" patternUnits="userSpaceOnUse" x="370" y="685" width="11" height="18"><path d="M0 4V12q0 5 2.500 5t2.500-5V5q0-4 3-4t3 4" fill="none" stroke="#e3e5e6" stroke-width="1.300"/></pattern>
      </defs>
      <text class="vplabel" x="33" y="139">[−][俯视][二维线框]</text>

      <!-- wall -->
      <path class="cad thin" clip-path="url(#wall)" d="M604.500 240.500l157-157m-157 182l157-157m-157 182l157-157m-157 182l157-157m-157 182l157-157m-157 182l157-157m-157 182l157-157m-157 182l157-157m-157 182l157-157m-157 182l157-157m-157 182l157-157m-157 182l157-157m-157 182l157-157m-157 182l157-157m-157 182l157-157m-157 182l157-157m-157 182l157-157m-157 182l157-157m-157 182l157-157m-157 182l157-157m-157 182l157-157m-157 182l157-157m-157 182l157-157"/>
      <path class="cad" d="M588 217.500h85l4-10.500 6 19 3-8.500h88.500M604.500 218v484M761.500 218v484M361 649.500h400.500"/>
      <!-- floor build-up -->
      <path class="cad" d="M361 613.500h243.500M361 622.500h243.500M366 665.500H813l24-10 10.500-25V435M361 683.500H830l25-10.500 10.500-25V435M361 702.500h764.500M1169.500 702.500H1279M361 790.500H1279"/>
      <path class="cad" d="M361 684.500h243.500" opacity=".7"/>
      <path fill="url(#coil)" d="M370 685h234v18H370z"/>
      <ellipse class="cad" cx="362" cy="670" rx="3" ry="4.500"/><ellipse class="cad" cx="362" cy="679" rx="3" ry="4.500"/>
      <!-- risers and headers -->
      <path class="cad" d="M789.500 318v313l-21 32M807.500 318v330l-3 15"/>
      <path class="cad" d="M799 285.500l12.500 5.500 5.500 12.500-5.500 12.500-12.500 5.500-12.500-5.500-5.500-12.500 5.500-12.500zM856.500 403l12.500 5.500 5.500 12.500-5.500 12.500-12.500 5.500-12.500-5.500-5.500-12.500 5.500-12.500z"/>
      <path class="cad" d="M856.500 469l7.500 3 3 8-3 8-7.500 3-7.500-3-3-8 3-8z"/>
      <circle class="cad" cx="856.500" cy="480" r="8"/><circle class="cad" cx="856.500" cy="480" r="5"/><circle class="cad" cx="856.500" cy="480" r="2"/>
      <path class="cad" d="M845 479.500h30V464"/>
      <!-- mortar surface, drain and section cut -->
      <path class="cad" d="M761.500 571.500L893 600l34 71.500L1125.500 684H1170l109-7.500M1125.500 684v106M1169.500 684v106M1278.500 668v139"/>
      <!-- dimensions -->
      <path class="cad" d="M761 250.500h38M798.500 246v22M761 377.500h95.500M856.500 373v16M547.500 301v312M547.500 303.500H586M547.500 420.500H575M779 249.500h2"/>
      <path class="cad tick" d="M758 254l6-6M796 254l6-6M758 381l6-6M853 381l6-6M544 300l6 6M544 417l6 6M544 610l6 6"/>
      <!-- leaders -->
      <path class="cad" d="M814 296l170-69.500h96M870 409L977 286.500h105M879 596l150-187.500h173M1023 677l40-143.500h142M1148 688l28.500-83.500H1345M1267 730.500h121M299 527.500h194l9 86"/>
      <path d="M590 874h342v5H590z" fill="#a3a8ad"/><path class="cad" d="M590 874.500h342M590 876.500h342M590 878.500h342M590 885.500h342"/>
      <!-- slab hatching -->
      <path class="cad thin" d="M365 790l87-87M447 790l72-72M529 790l87-87M610 790l87-87M692 790l87-87M774 790l87-87M856 790l87-87M917 790l87-87M977 790l87-87M1035 790l87-87M1093 790l32-31M1170 726l24-23M1170 784l82-81M1223 790l56-56"/>
      <path class="cad" d="M401 773l9 4-7 6zM431 749l9 4-7 6zM483 773l9 4-7 6zM513 749l9 4-7 6zM565 773l9 4-7 6zM594 749l9 4-7 6zM638 775l9 4-7 6zM666 748l9 4-7 6zM687 775l9 4-7 6zM725 777l9 4-7 6zM740 763l9 4-7 6zM766 745l9 4-7 6zM766 772l9 4-7 6zM827 752l9 4-7 6zM827 778l9 4-7 6zM856 736l9 4-7 6zM856 763l9 4-7 6zM900 772l9 4-7 6zM921 744l9 4-7 6zM964 767l9 4-7 6zM985 740l9 4-7 6zM1023 767l9 4-7 6zM1043 740l9 4-7 6zM1082 767l9 4-7 6zM1102 740l9 4-7 6zM1077 707l9 4-7 6zM1111 777l9 4-7 6zM1173 740l9 4-7 6zM1228 740l9 4-7 6zM1208 767l9 4-7 6zM1262 707l9 4-7 6zM1267 754l9 4-7 6zM1256 776l9 4-7 6z"/>
      <path class="cad" d="M482 707l6 7-7 1zM459 717l6 7-7 1zM476 734l6 7-7 1zM441 769l6 7-7 1zM563 707l6 7-7 1zM540 717l6 7-7 1zM559 734l6 7-7 1zM523 769l6 7-7 1zM645 707l6 7-7 1zM622 717l6 7-7 1zM640 734l6 7-7 1zM605 769l6 7-7 1zM722 710l6 7-7 1zM699 719l6 7-7 1zM718 731l6 7-7 1zM705 750l6 7-7 1zM662 769l6 7-7 1zM801 707l6 7-7 1zM797 728l6 7-7 1zM797 754l6 7-7 1zM893 716l6 7-7 1zM945 720l6 7-7 1zM1009 718l6 7-7 1zM1197 718l6 7-7 1z"/>
      <path class="dot" d="M502 717.500h1M452 720.500h1M470 738.500h1M436 741.500h1M406 765.500h1M454 767.500h1M435 773.500h1M584 717.500h1M534 720.500h1M552 738.500h1M517 741.500h1M487 765.500h1M536 767.500h1M517 773.500h1M665 717.500h1M616 720.500h1M634 738.500h1M599 741.500h1M569 765.500h1M618 767.500h1M599 773.500h1M691 741.500h1M671 741.500h1M739 717.500h1M713 735.500h1M701 754.500h1M656 773.500h1M770 737.500h1M770 764.500h1M729 769.500h1M745 781.500h1M818 714.500h1M791 732.500h1M791 758.500h1M861 728.500h1M861 755.500h1M832 744.500h1M832 770.500h1M887 719.500h1M925 735.500h1M925 763.500h1M962 713.500h1M939 723.500h1M989 732.500h1M989 759.500h1M1025 711.500h1M1003 720.500h1M1047 732.500h1M1047 759.500h1M1106 732.500h1M1106 759.500h1M1082 724.500h1M1177 732.500h1M1177 759.500h1M1232 732.500h1M1232 759.500h1M1191 720.500h1M1266 724.500h1M1266 770.500h1M1194 780.500h1"/>
      <!-- screed and gravel -->
      <path class="dot" d="M370 638.500h1M377 630.500h1M386 639.500h1M392 632.500h1M415 645.500h1M423 629.500h1M436 638.500h1M442 630.500h1M452 639.500h1M462 632.500h1M474 636.500h1M489 630.500h1M491 645.500h1M501 638.500h1M507 630.500h1M518 640.500h1M524 628.500h1M534 638.500h1M540 630.500h1M556 633.500h1M564 642.500h1M570 627.500h1M582 634.500h1M591 642.500h1M598 627.500h1M366 653.500h1M374 656.500h1M380 660.500h1M386 662.500h1M402 653.500h1M416 656.500h1M420 659.500h1M427 656.500h1M434 660.500h1M442 662.500h1M455 653.500h1M469 656.500h1M473 659.500h1M480 656.500h1M487 660.500h1M494 662.500h1M511 653.500h1M524 656.500h1M530 660.500h1M543 661.500h1M550 659.500h1M567 653.500h1M581 656.500h1M587 662.500h1M594 656.500h1M600 660.500h1"/>
      <path class="cad" d="M392 653l5 3-5 1zM411 651l5 3-5 1zM445 653l5 3-5 1zM463 651l5 3-5 1zM501 653l5 3-5 1zM519 651l5 3-5 1zM557 653l5 3-5 1zM575 651l5 3-5 1zM371 662l3 3h-5zM426 662l3 3h-5zM479 662l3 3h-5zM534 662l3 3h-5zM592 662l3 3h-5z"/>
      <path class="dot" d="M612 654.500h1M621 660.500h1M632 654.500h1M640 660.500h1M650 655.500h1M659 660.500h1M669 654.500h1M678 660.500h1M688 655.500h1M697 660.500h1M707 654.500h1M716 660.500h1M726 655.500h1M735 660.500h1M745 654.500h1M754 660.500h1M612 688.500h1M619 695.500h1M628 688.500h1M636 694.500h1M645 688.500h1M653 694.500h1M664 688.500h1M672 694.500h1M682 688.500h1M690 694.500h1M700 688.500h1M709 694.500h1M719 688.500h1M727 694.500h1M737 688.500h1M745 694.500h1M755 688.500h1"/>
      <!-- mortar stipple -->
      <path class="dot" d="M766 583.500h1M776 588.500h1M779 601.500h1M786 610.500h1M771 618.500h1M781 618.500h1M768 630.500h1M780 629.500h1M770 645.500h1M782 646.500h1M768 655.500h1M822 587.500h1M815 595.500h1M830 597.500h1M842 600.500h1M825 609.500h1M813 610.500h1M835 608.500h1M818 617.500h1M833 618.500h1M842 619.500h1M815 623.500h1M828 629.500h1M843 632.500h1M821 633.500h1M832 637.500h1M817 646.500h1M825 642.500h1M838 640.500h1M836 648.500h1M818 655.500h1M832 655.500h1M875 602.500h1M888 601.500h1M869 610.500h1M880 609.500h1M893 619.500h1M872 623.500h1M887 624.500h1M898 634.500h1M875 634.500h1M888 638.500h1M871 642.500h1M901 645.500h1M884 648.500h1M905 643.500h1M872 656.500h1M881 656.500h1M896 655.500h1M910 655.500h1M915 651.500h1M874 665.500h1M888 666.500h1M903 667.500h1M919 667.500h1M863 676.500h1M768 684.500h1M783 684.500h1M800 684.500h1M818 684.500h1M839 685.500h1M863 683.500h1M878 680.500h1M895 682.500h1M913 681.500h1M923 685.500h1M931 681.500h1M954 682.500h1M969 684.500h1M987 683.500h1M1006 683.500h1M1020 684.500h1M1040 681.500h1M1063 685.500h1M1084 686.500h1M1105 684.500h1M1119 690.500h1M780 687.500h1M801 698.500h1M818 699.500h1M836 692.500h1M848 698.500h1M870 693.500h1M875 698.500h1M891 691.500h1M917 690.500h1M938 690.500h1M914 699.500h1M960 692.500h1M983 694.500h1M1003 690.500h1M1020 696.500h1M1037 690.500h1M1057 696.500h1M1079 695.500h1M1100 690.500h1M1095 696.500h1M1113 696.500h1M1174 691.500h1M1187 685.500h1M1182 696.500h1M1195 695.500h1M1202 695.500h1M1208 691.500h1M1215 686.500h1M1222 686.500h1M1226 696.500h1M1239 686.500h1M1246 690.500h1M1258 696.500h1M1268 692.500h1M1272 690.500h1"/>

      <!-- notes -->
      <g class="note">
        <text x="987" y="212">集水器</text>
        <text x="989" y="273">分水器</text>
        <text x="1030" y="395">防水沙浆抹面</text>
        <text x="1043" y="448">坡度<tspan class="num">0.15</tspan></text>
        <text x="1059" y="517">坡度<tspan class="num">0.05</tspan></text>
        <text x="1177" y="595"><tspan class="num">ø50</tspan></text>
        <text x="1259" y="590">泄水孔</text>
        <text x="1302" y="719">结构层</text>
        <text x="299" y="515">装修后室内地面</text>
        <text x="308" y="563">即建筑地面</text>
        <text x="30" y="402">压力为</text>
        <text class="big" x="593" y="858">分配器安装剖面示意图</text>
      </g>
      <g class="dimtext">
        <text x="833" y="370">120</text>
        <text transform="translate(545 362) rotate(-90)">175</text>
        <text transform="translate(545 517) rotate(-90)">400</text>
      </g>

      <!-- view cube -->
      <circle cx="1490" cy="198.500" r="50" fill="none" stroke="#42474f" stroke-width="12"/>
      <path d="M1466 175h48v47h-48z" fill="#a9aaab"/><path d="M1475 184h30v29h-30z" fill="#9c9faa"/>
      <text class="face" x="1490" y="208">上</text>
      <g class="compass"><text x="1490" y="154">北</text><text x="1438" y="206">西</text><text x="1542" y="206">东</text><text x="1490" y="258">南</text></g>
      <rect x="1468" y="279" width="44" height="16" rx="3" fill="#8b8b99"/>
      <text class="wcs" x="1472" y="291">WCS</text><path d="M1501 285h5l-2.500 3z" fill="#b5b5c2"/>

      <!-- coordinate axes and cursor -->
      <path class="cad" d="M55.500 1072v45.500H101M51.500 1113.500h9v9h-9z"/>
      <g class="axis"><text x="62" y="1068">Y</text><text x="112" y="1117">X</text></g>
      <path class="cad" d="M30 1025.500h1537M1497.500 123v1020"/>
      <path d="M1492.500 1020.500h11v11h-11z" fill="#212830" stroke="#f0f2f3"/>
    </svg>
  </div>

  <aside class="side right">
    <div class="vpanel modify">
      <i class="hgrip"></i>
      <button aria-label="删除"><svg><use href="#erase"/></svg></button>
      <button aria-label="复制"><svg><use href="#mcopy"/></svg></button>
      <button aria-label="镜像"><svg><use href="#mirror"/></svg></button>
      <button aria-label="偏移"><svg><use href="#offset"/></svg></button>
      <button aria-label="阵列"><svg><use href="#array"/></svg></button>
      <button aria-label="移动"><svg><use href="#move"/></svg></button>
      <button aria-label="旋转"><svg><use href="#rotate"/></svg></button>
      <button aria-label="缩放"><svg><use href="#scale"/></svg></button>
      <button aria-label="拉伸"><svg><use href="#stretch"/></svg></button>
      <button aria-label="修剪"><svg><use href="#trim"/></svg></button>
      <button aria-label="延伸"><svg><use href="#extend"/></svg></button>
      <button aria-label="打断于点"><svg><use href="#brkp"/></svg></button>
      <button aria-label="打断"><svg><use href="#brk"/></svg></button>
      <button aria-label="合并"><svg><use href="#join"/></svg></button>
      <button aria-label="倒角"><svg><use href="#chamfer"/></svg></button>
      <button aria-label="圆角"><svg><use href="#fillet"/></svg></button>
      <button aria-label="光顺曲线"><svg><use href="#blend"/></svg></button>
      <button aria-label="分解"><svg><use href="#explode"/></svg></button>
    </div>
  </aside>
</main>

<section class="command">
  <div class="handle">
    <i class="hgrip bright"></i>
    <button aria-label="关闭命令行"><svg><use href="#close"/></svg></button>
    <button class="tune" aria-label="自定义"><svg><use href="#wrench"/></svg></button>
  </div>
  <div class="cmdbody">
    <div class="history">选择注释对象或 [放弃(U)/模式(M)]: *取消*</div>
    <div class="entry">
      <button aria-label="最近的命令"><svg><use href="#prompt"/></svg><i class="tri"></i></button>
      <input type="text" aria-label="命令" placeholder="键入命令">
    </div>
  </div>
</section>

<footer class="status">
  <div class="layouts"><button class="on">模型</button><button>布局1</button><button class="plus" aria-label="新建布局">+</button></div>
  <div class="toggles">
    <div class="grp"><button class="txt model">模型</button></div>
    <div class="grp">
      <button aria-label="栅格"><svg><use href="#gridi"/></svg></button>
      <button aria-label="捕捉"><svg><use href="#snap"/></svg></button>
      <button class="c" aria-label="捕捉设置"><svg><use href="#caret"/></svg></button>
    </div>
    <div class="grp">
      <button aria-label="正交"><svg><use href="#ortho"/></svg></button>
      <button aria-label="极轴"><svg><use href="#polar"/></svg></button>
      <button class="c" aria-label="极轴设置"><svg><use href="#caret"/></svg></button>
      <button aria-label="等轴测"><svg><use href="#iso"/></svg></button>
      <button class="c" aria-label="等轴测设置"><svg><use href="#caret"/></svg></button>
    </div>
    <div class="grp">
      <button aria-label="对象捕捉追踪"><svg><use href="#otrack"/></svg></button>
      <button class="act" aria-label="对象捕捉"><svg><use href="#osnap"/></svg></button>
      <button class="c" aria-label="对象捕捉设置"><svg><use href="#caret"/></svg></button>
    </div>
    <div class="grp"><button aria-label="线宽"><svg><use href="#lwt"/></svg></button></div>
    <div class="grp">
      <button class="act" aria-label="注释可见性"><svg><use href="#anvis"/></svg></button>
      <button aria-label="自动缩放"><svg><use href="#anauto"/></svg></button>
      <button aria-label="注释比例"><svg><use href="#anscale"/></svg></button>
      <button class="txt">1:1</button>
      <button class="c" aria-label="比例列表"><svg><use href="#caret"/></svg></button>
      <button aria-label="切换工作空间"><svg><use href="#gear"/></svg></button>
      <button class="c" aria-label="工作空间列表"><svg><use href="#caret"/></svg></button>
    </div>
    <div class="grp"><button aria-label="注释监视器"><svg><use href="#plus"/></svg></button></div>
    <div class="grp"><button aria-label="隔离对象"><svg><use href="#isolate"/></svg></button></div>
    <div class="grp"><button aria-label="图形性能"><svg><use href="#hw"/></svg></button></div>
    <div class="grp">
      <button aria-label="全屏显示"><svg><use href="#full"/></svg></button>
      <button aria-label="自定义"><svg><use href="#burger"/></svg></button>
    </div>
  </div>
</footer>

<svg class="overlay" aria-hidden="true">
  <g class="mark">
    <text transform="translate(20 388) rotate(-45)">知末网 www.znzmo.com</text>
    <text transform="translate(571 388) rotate(-45)">知末网 www.znzmo.com</text>
    <text transform="translate(1122 388) rotate(-45)">知末网 www.znzmo.com</text>
    <text transform="translate(-133 752) rotate(-45)">知末网 www.znzmo.com</text>
    <text transform="translate(418 752) rotate(-45)">知末网 www.znzmo.com</text>
    <text transform="translate(969 752) rotate(-45)">知末网 www.znzmo.com</text>
    <text transform="translate(1520 752) rotate(-45)">知末网 www.znzmo.com</text>
    <text transform="translate(270 1117) rotate(-45)">知末网 www.znzmo.com</text>
    <text transform="translate(821 1117) rotate(-45)">知末网 www.znzmo.com</text>
    <text transform="translate(1372 1117) rotate(-45)">知末网 www.znzmo.com</text>
  </g>
  <text class="brand" x="1407" y="1149">知末</text>
  <text class="ident" x="1361" y="1197">ID: 1158126756</text>
</svg>
</div>
</body>
</html>
```
FILE: styles.css
```
* { box-sizing: border-box; }
body {
  margin: 0;
  background: #212830;
  color: #c3c6cb;
  font: 11px/16px "Noto Sans", "Noto Sans CJK SC", sans-serif;
}
button { border: 0; padding: 0; margin: 0; background: none; color: inherit; font: inherit; display: flex; align-items: center; justify-content: center; flex: none; }
i { flex: none; display: block; }
a { color: inherit; text-decoration: none; }
.sprite { position: absolute; width: 0; height: 0; }
.app { position: relative; display: flex; flex-direction: column; min-height: 100vh; border: 2px solid #277d9d; overflow: hidden; }

/* icon paint */
.w { fill: #dfe1e4; }
.g { fill: #8d939c; }
.b { fill: #86c3ee; }
.y { fill: #efc36f; }
.r { fill: #e06a6a; }
.d { fill: #3a424f; }
.dl { fill: none; stroke: #4a5260; }
.lw { fill: none; stroke: #dfe1e4; }
.lw2 { fill: none; stroke: #dfe1e4; stroke-width: 2; }
.lb { fill: none; stroke: #77b5e2; }
.lg { fill: none; stroke: #53b87a; stroke-width: 2; }

/* title bar */
.titlebar { display: flex; align-items: center; height: 24px; padding: 0 3px 0 2px; }
.titlebar svg { width: 16px; height: 16px; }
.ib { width: 22px; height: 20px; }
.cb { width: 11px; height: 20px; }
.cb svg { width: 6px; height: 14px; }
.titlebar .cb svg { width: 7px; }
.cb.wide { width: 17px; }
.cb.first { width: 11px; margin-right: 8px; }
.faded { opacity: .45; }
.quick { display: flex; align-items: center; margin-left: 1px; }
.titlebar .quick .cb.wide svg { width: 9px; }
.share { color: #8cc4ec; gap: 3px; margin-left: 3px; }
.caption { flex: 1; margin: 0; font-size: 12px; font-weight: 400; color: #d8dade; display: flex; justify-content: center; gap: 14px; white-space: nowrap; padding-left: 6px; }
.file { font-size: 11px; }
.account, .winctl { display: flex; align-items: center; }
.arrow { width: 14px; font-size: 12px; color: #fff; }
.find { width: 164px; height: 18px; border: 0; padding: 0 3px; background: #485062; color: #d0d2d8; font: italic 11px/16px "Noto Sans", "Noto Sans CJK SC", sans-serif; }
.find::placeholder { color: #a9adb6; opacity: 1; }
.who { font-size: 12px; gap: 3px; margin-left: 2px; }
.account .cb { width: 14px; }
.bar { width: 1px; height: 18px; background: #454d5a; margin: 0 3px; }
.winctl { margin-left: 49px; }
.winctl .ib { width: 23px; }

.menubar { display: flex; align-items: center; gap: 24px; height: 20px; padding: 0 0 0 14px; border-bottom: 1px solid #3a424e; white-space: nowrap; }
.docctl { display: flex; margin-left: auto; }
.docctl .ib { width: 17px; }
.docctl svg { width: 15px; height: 15px; }

.tabs { display: flex; align-items: flex-end; height: 22px; padding-left: 18px; }
.tab { height: 19px; background: #2d3542; border-radius: 9px 9px 0 0; display: flex; align-items: center; }
.tab.start { width: 117px; justify-content: flex-start; padding-left: 13px; }
.tab.active { width: 212px; background: #3b4453; color: #fff; padding-left: 10px; }
.tabname { font-weight: 700; }
.x { width: 20px; color: #a5aab2; font-size: 12px; margin-left: 2px; }
.tab.add { width: 20px; height: 14px; margin: 0 0 3px 4px; border-radius: 5px; justify-content: center; font-size: 15px; }

/* tool rows */
.ribbon { display: flex; flex-direction: column; gap: 3px; padding: 4px 2px; background: #3b4453; }
.row { display: flex; height: 22px; }
.panel { display: flex; align-items: center; background: #333b49; outline: 1px solid #2a313d; outline-offset: -1px; }
.grip { width: 10px; height: 16px; background: radial-gradient(circle, #8b929d 1px, transparent 1px); background-size: 3px 3px; background-clip: content-box; padding: 0 3px; }
.row .panel:first-child .grip { width: 8px; padding: 0 2px 0 1px; }
.grip.slim { width: 8px; padding: 0 2px; }
.sep { width: 7px; height: 18px; background: linear-gradient(90deg, transparent 2px, #10141a 2px, #10141a 3px, #b9bdc4 3px, #b9bdc4 4px, transparent 4px); }
.sep.thin { width: 6px; }
.tool { width: 21px; height: 22px; }
.tool svg { width: 17px; height: 17px; }
.drop { width: 11px; height: 22px; }
.drop svg { width: 7px; height: 16px; }
.combo { position: relative; height: 20px; display: flex; align-items: center; background: #fff; }
.combo::after { content: ""; position: absolute; right: 5px; top: 5px; width: 5px; height: 5px; border: solid #555; border-width: 0 1px 1px 0; transform: rotate(45deg); pointer-events: none; }
.combo select { appearance: none; flex: 1; min-width: 0; height: 20px; border: 0; background: none; padding: 0 14px 0 5px; color: #111; font: 12px/18px "Noto Sans", "Noto Sans CJK SC", sans-serif; }
.combo select:disabled { color: #777; opacity: 1; }
.layer { width: 278px; margin-left: 1px; }
.layer .state { width: 86px; height: 20px; flex: none; }
.color { width: 139px; }
.swatch { width: 13px; height: 13px; margin-left: 2px; background: #0ff; border: 1px solid #222; }
.color select { padding-left: 4px; }
.ltype { width: 148px; }
.ltype .rule { width: 56px; }
.lweight { width: 115px; }
.lweight .rule { width: 34px; }
.rule { height: 1px; background: #111; margin-left: 4px; }
.pstyle { width: 111px; }
.pstyle select { padding-left: 9px; }
.pstyle::after { border-color: #aaa; }
.dimstyle { width: 109px; }
.dimstyle select { padding-left: 16px; }

/* drawing area */
.work { display: flex; background: #212830; }
.side { flex: none; background: #3b4453; padding: 1px 2px; }
.left { width: 28px; }
.right { width: 31px; padding-left: 3px; }
.vpanel { width: 23px; padding: 2px 0 0; display: flex; flex-direction: column; justify-content: space-between; align-items: center; background: #343c4a; border: 1px solid #2a313d; }
.vpanel button { width: 20px; height: 20px; margin-top: -1px; }
.vpanel svg { width: 17px; height: 17px; }
.draw { height: 414px; }
.modify { height: 374px; }
.hgrip { width: 14px; height: 4px; background: repeating-linear-gradient(90deg, #8b929d 0 1px, transparent 1px 2px); }
.hgrip.bright { width: 16px; height: 5px; background: repeating-linear-gradient(90deg, #dfe1e4 0 2px, transparent 2px 3px); }
.canvas { flex: 1; min-width: 0; }
.drawing { display: block; width: 100%; height: auto; }
.cad { fill: none; stroke: #eef0f2; stroke-width: 1; }
.thin { stroke: #dfe2e4; }
.tick { stroke-width: 2; }
.dot { fill: none; stroke: #c3c7cb; }
.note { font: 200 31px "Noto Sans CJK SC", sans-serif; fill: #fff; }
.note .num { font-size: 40px; }
.note .big { font-size: 33px; }
.dimtext { font: 14px "Liberation Sans", sans-serif; fill: #f0f2f3; text-anchor: middle; }
.vplabel { font: 12px "Noto Sans", "Noto Sans CJK SC", sans-serif; fill: #06080a; }
.face { font: 500 26px "Noto Sans CJK SC", sans-serif; fill: #55585f; text-anchor: middle; }
.compass { font: 17px "Noto Sans CJK SC", sans-serif; fill: #a3a5a6; text-anchor: middle; }
.wcs { font: 11px "Liberation Sans", sans-serif; fill: #4d4e5c; }
.axis { font: 200 18px "Noto Sans CJK SC", sans-serif; fill: #fff; text-anchor: middle; }

/* command line */
.command { display: flex; background: #2a313d; border-top: 1px solid #3a424e; padding-right: 2px; }
.handle { width: 25px; flex: none; display: flex; flex-direction: column; align-items: center; padding-top: 4px; }
.handle button { margin-top: 3px; }
.handle .tune { margin-top: 7px; }
.handle svg { width: 14px; height: 14px; }
.cmdbody { flex: 1; display: flex; flex-direction: column; gap: 2px; padding-top: 1px; }
.history { background: #c6c6c6; color: #1c1c1c; height: 26px; padding: 0 2px; font: 16px/26px "DejaVu Sans Mono", "Noto Sans CJK SC", monospace; border-right: 1px solid #fff; }
.entry { display: flex; align-items: center; height: 22px; background: #fff; }
.entry button { width: 30px; gap: 2px; }
.entry svg { width: 16px; height: 16px; }
.tri { border: 3px solid transparent; border-top-color: #555; margin-top: 3px; }
.entry input { flex: 1; border: 0; padding: 0 5px; background: none; outline: 0; font: italic 16px/22px "DejaVu Sans Mono", "Noto Sans CJK SC", monospace; }
.entry input::placeholder { color: #777; opacity: 1; }

/* status bar */
.status { display: flex; justify-content: space-between; align-items: flex-start; min-height: 29px; padding: 2px 4px 0 14px; }
.layouts { display: flex; gap: 3px; }
.layouts button { height: 15px; padding: 0 9px; background: #2b3340; border-radius: 0 0 8px 8px; }
.layouts .on { background: #3b4453; color: #fff; font-weight: 700; }
.layouts .plus { width: 20px; padding: 0; font-size: 14px; margin-left: 3px; }
.toggles { display: flex; gap: 2px; }
.grp { display: flex; background: #2e3643; }
.grp button { width: 22px; height: 22px; }
.grp svg { width: 17px; height: 17px; }
.grp .c { width: 15px; }
.grp .c svg { width: 8px; height: 17px; }
.grp .act { background: #4c7fb5; }
.grp .txt { color: #e2e4e7; width: 20px; }
.grp .model { width: 28px; font-weight: 500; }

/* site mark laid over the window */
.overlay { position: absolute; left: -2px; top: -2px; width: calc(100% + 4px); height: calc(100% + 4px); pointer-events: none; }
.mark { font: 34px "Noto Sans CJK SC", sans-serif; fill: #a0a6b4; opacity: .16; }
.brand { font: 400 61px "Noto Sans CJK SC", sans-serif; fill: #fff; fill-opacity: .75; stroke: #888; stroke-opacity: .5; }
.ident { font: 31px "Noto Sans", sans-serif; fill: #fff; stroke: #8a8a8a; stroke-width: 2; paint-order: stroke; }
```
